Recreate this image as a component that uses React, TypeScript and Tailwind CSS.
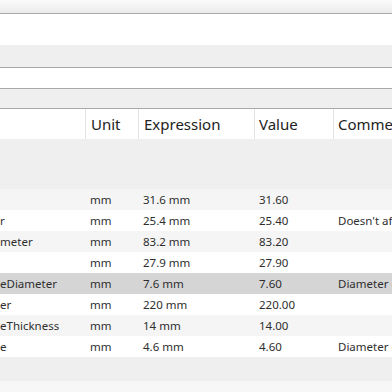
import React from "react";

type Param = {
  name: string;
  unit: string;
  expression: string;
  value: string;
  comment: string;
  selected?: boolean;
};

const params: Param[] = [
  { name: "", unit: "mm", expression: "31.6 mm", value: "31.60", comment: "" },
  { name: "r", unit: "mm", expression: "25.4 mm", value: "25.40", comment: "Doesn't affect" },
  { name: "meter", unit: "mm", expression: "83.2 mm", value: "83.20", comment: "" },
  { name: "", unit: "mm", expression: "27.9 mm", value: "27.90", comment: "" },
  { name: "eDiameter", unit: "mm", expression: "7.6 mm", value: "7.60", comment: "Diameter of", selected: true },
  { name: "er", unit: "mm", expression: "220 mm", value: "220.00", comment: "" },
  { name: "eThickness", unit: "mm", expression: "14 mm", value: "14.00", comment: "" },
  { name: "e", unit: "mm", expression: "4.6 mm", value: "4.60", comment: "Diameter of" },
];

const cols = "grid grid-cols-[86px_53px_116px_79px_1fr]";

export default function App() {
  return (
    <div
      className="w-[392px] h-[392px] overflow-hidden bg-white text-[#2a2a2a] flex flex-col"
      style={{ fontFamily: '"Noto Sans", "Open Sans", sans-serif' }}
    >
      {/* toolbar strip */}
      <div className="h-[14px] bg-gradient-to-b from-[#fbfbfb] to-[#ebebeb] border-b border-[#a9a9a9] shrink-0" />
      <div className="h-[31px] bg-white shrink-0" />
      <div className="h-[23px] bg-[#efefef] border-b border-[#a9a9a9] shrink-0" />
      <div className="h-[21px] bg-white border-b border-[#a9a9a9] shrink-0" />
      <div className="h-[20px] bg-[#efefef] border-b border-[#a9a9a9] shrink-0" />

      {/* header */}
      <div className={`${cols} h-[30px] bg-white text-[15px] text-[#222] shrink-0`}>
        <div className="border-r border-[#e3e3e3]" />
        <div className="border-r border-[#e3e3e3] pl-[5px] flex items-center">Unit</div>
        <div className="border-r border-[#e3e3e3] pl-[5px] flex items-center">Expression</div>
        <div className="border-r border-[#e3e3e3] pl-[4px] flex items-center">Value</div>
        <div className="pl-[4px] flex items-center whitespace-nowrap overflow-hidden">Comment</div>
      </div>

      {/* group area */}
      <div className="h-[50px] bg-[#efefef] shrink-0" />

      {/* rows */}
      <div className="flex flex-col text-[11.5px] text-[#2e2e2e] shrink-0">
        {params.map((p, i) => (
          <div
            key={i}
            className={`${cols} h-[21px] items-center whitespace-nowrap ${
              p.selected ? "bg-[#d5d5d5]" : i % 2 === 0 ? "bg-[#f5f5f5]" : "bg-white"
            }`}
          >
            <div className="overflow-hidden">{p.name}</div>
            <div className="pl-[4px]">{p.unit}</div>
            <div className="pl-[4px]">{p.expression}</div>
            <div className="pl-[4px]">{p.value}</div>
            <div className="pl-[4px] overflow-hidden">{p.comment}</div>
          </div>
        ))}
      </div>

      <div className="h-[24px] bg-[#efefef] shrink-0" />
      <div className="flex-1 bg-[#f7f7f7]" />
    </div>
  );
}
